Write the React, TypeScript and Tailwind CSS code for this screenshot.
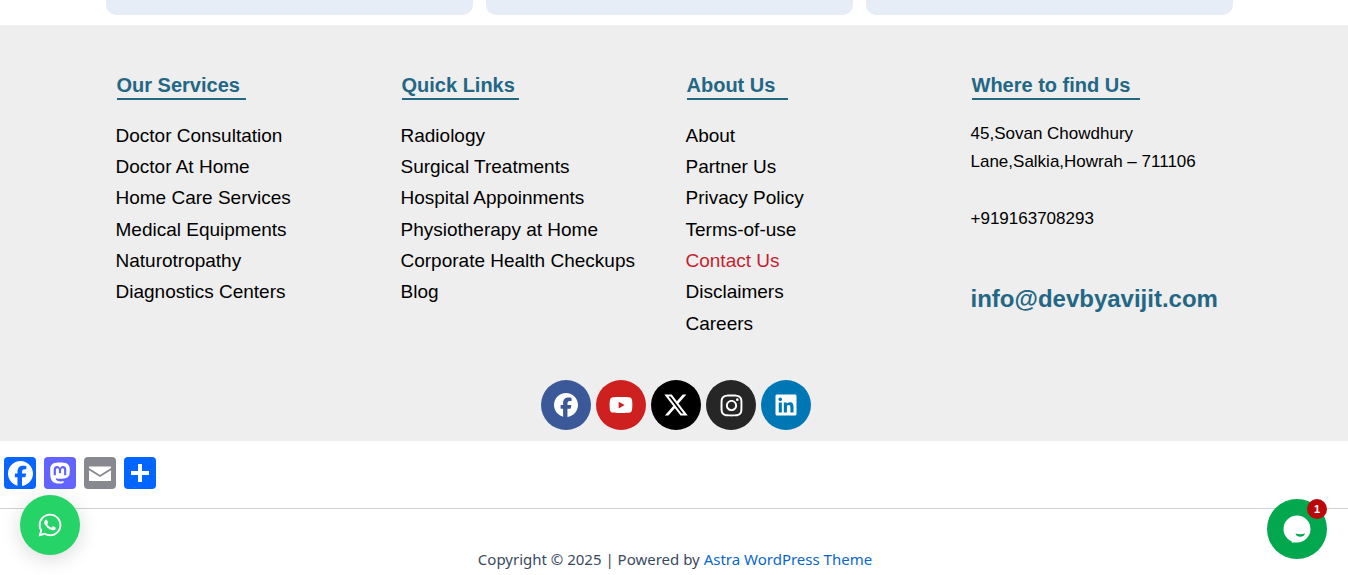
import { FaFacebook, FaInstagram, FaLinkedin, FaMastodon, FaWhatsapp, FaXTwitter, FaYoutube } from "react-icons/fa6";

const COLUMNS = [
  {
    title: "Our Services",
    underline: "w-[129px]",
    links: ["Doctor Consultation", "Doctor At Home", "Home Care Services", "Medical Equipments", "Naturotropathy", "Diagnostics Centers"],
  },
  {
    title: "Quick Links",
    underline: "w-[117px]",
    links: ["Radiology", "Surgical Treatments", "Hospital Appoinments", "Physiotherapy at Home", "Corporate Health Checkups", "Blog"],
  },
  {
    title: "About Us",
    underline: "w-[101px]",
    links: ["About", "Partner Us", "Privacy Policy", "Terms-of-use", "Contact Us", "Disclaimers", "Careers"],
  },
];

function FooterHeading({ title, underline }: { title: string; underline: string }) {
  return (
    <div className={`${underline} ml-[1.5px] h-[30px] border-b-2 border-[#236785]`}>
      <h2 className="-ml-[0.5px] text-[20px] font-bold leading-[30px] text-[#236785]">{title}</h2>
    </div>
  );
}

function SocialLink({ color, children }: { color: string; children: React.ReactNode }) {
  return <a className={`flex h-[50px] w-[50px] items-center justify-center rounded-full text-[24px] text-white ${color}`}>{children}</a>;
}

export default function App() {
  return (
    <div className="relative h-[575px] overflow-hidden bg-white font-['Liberation_Sans',Arial,sans-serif]">
      <div className="ml-[106px] flex h-[25px] gap-[13px] pb-[10px]">
        <div className="h-[15px] w-[367px] rounded-b-[10px] bg-[#e7edf7]" />
        <div className="h-[15px] w-[367px] rounded-b-[10px] bg-[#e7edf7]" />
        <div className="h-[15px] w-[367px] rounded-b-[10px] bg-[#e7edf7]" />
      </div>

      <footer className="h-[416px] bg-[#eeeeee] pt-[45px]">
        <div className="ml-[115.5px] grid h-[310px] grid-cols-[285px_285px_285px_285px]">
          {COLUMNS.map((col) => (
            <div key={col.title}>
              <FooterHeading title={col.title} underline={col.underline} />
              <ul className="mt-[19.75px] text-[19px] leading-[31.3px] text-black">
                {col.links.map((link) => (
                  <li key={link} className={link === "Contact Us" ? "text-[#c41f2e]" : ""}>
                    {link}
                  </li>
                ))}
              </ul>
            </div>
          ))}
          <div>
            <FooterHeading title="Where to find Us" underline="w-[168px]" />
            <p className="mt-5 text-[17px] leading-[28.3px] text-black">
              45,Sovan Chowdhury
              <br />
              Lane,Salkia,Howrah – 711106
            </p>
            <p className="mt-[28px] text-[17px] leading-[28.3px] text-black">+919163708293</p>
            <p className="mt-[48px] text-[24px] font-bold leading-[36px] text-[#236785]">info@devbyavijit.com</p>
          </div>
        </div>
        <div className="flex justify-center gap-[5px] pl-1">
          <SocialLink color="bg-[#3b5998]"><FaFacebook /></SocialLink>
          <SocialLink color="bg-[#cd201f]"><FaYoutube /></SocialLink>
          <SocialLink color="bg-black"><FaXTwitter className="text-[26px]" /></SocialLink>
          <SocialLink color="bg-[#262626]"><FaInstagram className="text-[25px]" /></SocialLink>
          <SocialLink color="bg-[#0077b5]"><FaLinkedin /></SocialLink>
        </div>
      </footer>

      <div className="flex h-[68px] gap-2 border-b border-[#d1d1d6] pl-1 pt-4">
        <a className="flex h-8 w-8 items-center justify-center rounded-[4px] bg-[#0866ff] text-[25px] text-white"><FaFacebook /></a>
        <a className="flex h-8 w-8 items-center justify-center rounded-[4px] bg-[#6364ff] text-[24px] text-white"><FaMastodon /></a>
        <a className="flex h-8 w-8 items-center justify-center rounded-[4px] bg-[#888990]">
          <svg viewBox="0 0 32 32" className="h-8 w-8" fill="#fff">
            <path d="M5 9.500h22v1.600L16 18 5 11.100z" />
            <path d="M5 13.200 16 20l11-6.800V24H5z" />
          </svg>
        </a>
        <a className="flex h-8 w-8 items-center justify-center rounded-[4px] bg-[#0166ff]">
          <svg viewBox="0 0 32 32" className="h-8 w-8" fill="#fff">
            <path d="M14 7h4v7h7v4h-7v7h-4v-7H7v-4h7z" />
          </svg>
        </a>
      </div>

      <p className="mt-[40px] pl-[2px] text-center font-['Noto_Sans',sans-serif] text-[15px] leading-[20px] text-[#3a4a5e]">
        Copyright © 2025 | Powered by <a className="text-[#0b66c9]">Astra WordPress Theme</a>
      </p>

      {/* floating widgets */}
      <a className="absolute left-5 top-[495px] flex h-[60px] w-[60px] items-center justify-center rounded-full bg-[#25d366] text-[26px] text-white shadow-[0_4px_20px_rgba(0,0,0,0.15)]">
        <FaWhatsapp />
      </a>
      <a className="absolute left-[1267px] top-[499px] h-[60px] w-[60px] rounded-full bg-[#03a84e]">
        <svg viewBox="0 0 60 60" className="h-[60px] w-[60px]">
          <circle cx="30" cy="30" r="13.500" fill="#fff" />
          <path d="M24.700 43.700 27 38l9 3.500c-3.500 1-7.500 1.500-11.300 2.200z" fill="#fff" />
          <path d="M28.500 34.500c3 1 6.500 1 9.500 0-.6 2.200-2.400 3.200-4.800 3.200s-4.100-1-4.700-3.200z" fill="#03a84e" />
        </svg>
        <span className="absolute left-10 top-0 flex h-5 w-5 items-center justify-center rounded-full bg-[#b9090b] text-[11px] font-bold text-white">1</span>
      </a>
    </div>
  );
}
